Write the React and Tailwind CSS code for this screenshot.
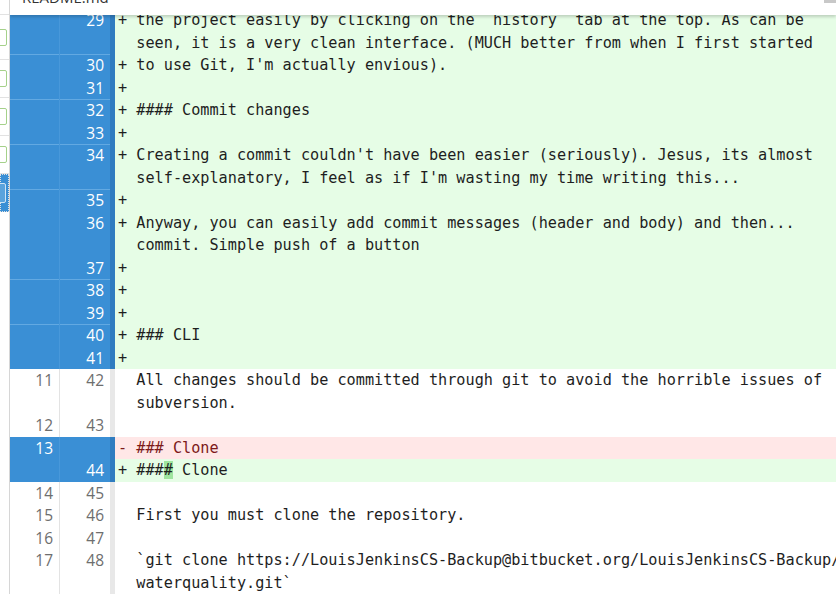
import React from 'react';

// one entry per logical line; `lines` holds the wrapped visual lines
const rows = [
    { o: '', n: '29', type: 'add', lines: ['the project easily by clicking on the `history` tab at the top. As can be', 'seen, it is a very clean interface. (MUCH better from when I first started'] },
    { o: '', n: '30', type: 'add', sep: true, lines: ["to use Git, I'm actually envious)."] },
    { o: '', n: '31', type: 'add', lines: [''] },
    { o: '', n: '32', type: 'add', sep: true, lines: ['#### Commit changes'] },
    { o: '', n: '33', type: 'add', lines: [''] },
    { o: '', n: '34', type: 'add', sep: true, lines: ["Creating a commit couldn't have been easier (seriously). Jesus, its almost", "self-explanatory, I feel as if I'm wasting my time writing this..."] },
    { o: '', n: '35', type: 'add', sep: true, lines: [''] },
    { o: '', n: '36', type: 'add', lines: ['Anyway, you can easily add commit messages (header and body) and then...', 'commit. Simple push of a button'] },
    { o: '', n: '37', type: 'add', lines: [''] },
    { o: '', n: '38', type: 'add', sep: true, lines: [''] },
    { o: '', n: '39', type: 'add', lines: [''] },
    { o: '', n: '40', type: 'add', sep: true, lines: ['### CLI'] },
    { o: '', n: '41', type: 'add', lines: [''] },
    { o: '11', n: '42', type: 'ctx', lines: ['All changes should be committed through git to avoid the horrible issues of', 'subversion.'] },
    { o: '12', n: '43', type: 'ctx', lines: [''] },
    { o: '13', n: '', type: 'del', lines: ['### Clone'] },
    { o: '', n: '44', type: 'add', hl: true, lines: ['#### Clone'] },
    { o: '14', n: '45', type: 'ctx', lines: [''] },
    { o: '15', n: '46', type: 'ctx', lines: ['First you must clone the repository.'] },
    { o: '16', n: '47', type: 'ctx', lines: [''] },
    { o: '17', n: '48', type: 'ctx', lines: ['`git clone https://LouisJenkinsCS-Backup@bitbucket.org/LouisJenkinsCS-Backup/', 'waterquality.git`'] },
];

const sideItems = [
    { h: 'h-[45px]', kind: 'box' },
    { h: 'h-[38px]', kind: 'box' },
    { h: 'h-[38px]', kind: 'box' },
    { h: 'h-[38px]', kind: 'box' },
    { h: 'h-[38px]', kind: 'sel' },
];

function DiffRow({ row }) {
    const changed = row.type !== 'ctx';
    const gutter = changed ? 'bg-[#3a8fd5] text-white' : 'bg-white text-[#6e6e6e]';
    const sep = row.sep ? 'shadow-[inset_0_1px_0_#62a9e2]' : '';
    const bg = row.type === 'add' ? 'bg-[#e6fde6]' : row.type === 'del' ? 'bg-[#ffe7e7]' : 'bg-white';
    const prefix = row.type === 'add' ? '+' : row.type === 'del' ? '-' : ' ';
    const textColor = row.type === 'del' ? 'text-[#7d1a1a]' : 'text-[#1e1e1e]';

    return (
        <div className="flex">
            <div className={`flex shrink-0 text-[15.5px] ${gutter} ${sep}`}>
                <div className={`w-[50px] text-right pr-[6px] border-r ${changed ? 'border-[#4898da]' : 'border-[#e3e3e3]'}`}>
                    <div className="h-[22.5px] leading-[22.5px]">{row.o}</div>
                </div>
                <div className="w-[50px] text-right pr-[6px]">
                    <div className="h-[22.5px] leading-[22.5px]">{row.n}</div>
                </div>
            </div>
            <div className={`w-[5px] shrink-0 ${changed ? 'bg-[#2f7cc0]' : 'bg-[#e8e8e8]'}`} />
            <div className={`flex-1 pl-[3px] ${bg} ${textColor} font-['DejaVu_Sans_Mono',monospace] text-[15.2px]`}>
                {row.lines.map((line, i) => (
                    <div key={i} className="h-[22.5px] leading-[22.5px] whitespace-pre overflow-hidden">
                        {i === 0 ? prefix : ' '}{' '}
                        {row.hl ? (
                            <>###<span className="bg-[#9fe59f]">#</span>{line.slice(4)}</>
                        ) : line}
                    </div>
                ))}
            </div>
        </div>
    );
}

export default function App() {
    return (
        <div className="w-[836px] h-[594px] overflow-hidden bg-white flex font-['Open_Sans',sans-serif] text-[14px]">
            {/* file list strip, mostly scrolled off to the left */}
            <div className="w-[10px] shrink-0 border-r border-[#d6d6d6] flex flex-col overflow-hidden">
                <div className="h-[15px] shrink-0 border-b border-[#e2e2e2]" />
                {sideItems.map((item, i) => (
                    <div key={i} className={`${item.h} shrink-0 border-b border-[#e2e2e2] flex items-center ${item.kind === 'sel' ? 'bg-[#3a8fd5] border border-dotted border-[#1c3a5a]' : ''}`}>
                        {item.kind === 'box' ? (
                            <div className="w-[16px] h-[17px] -ml-[9px] border border-[#a5d18a] rounded-[2px] bg-white" />
                        ) : (
                            <div className="w-[14px] h-[20px] -ml-[9px] border border-[#cfe4f5] rounded-[2px] bg-[#5aa3dd]" />
                        )}
                    </div>
                ))}
                <div className="flex-1" />
            </div>

            <div className="flex-1 relative overflow-hidden">
                {/* file header, content scrolls beneath it */}
                <div className="absolute top-0 left-0 right-0 h-[15px] bg-white shadow-[0_2px_3px_rgba(0,0,0,0.18)] z-10 overflow-hidden">
                    <div className="pl-[12px] -mt-[13px] text-[15px] text-[#333] font-['Open_Sans',sans-serif] leading-[20px]">README.md</div>
                    <div className="absolute top-0 right-0 w-[12px] h-[3px] bg-[#c8c8c8]" />
                </div>

                <div className="mt-[9px] flex flex-col">
                    {rows.map((row, i) => (
                        <DiffRow key={i} row={row} />
                    ))}
                </div>
            </div>
        </div>
    );
}
